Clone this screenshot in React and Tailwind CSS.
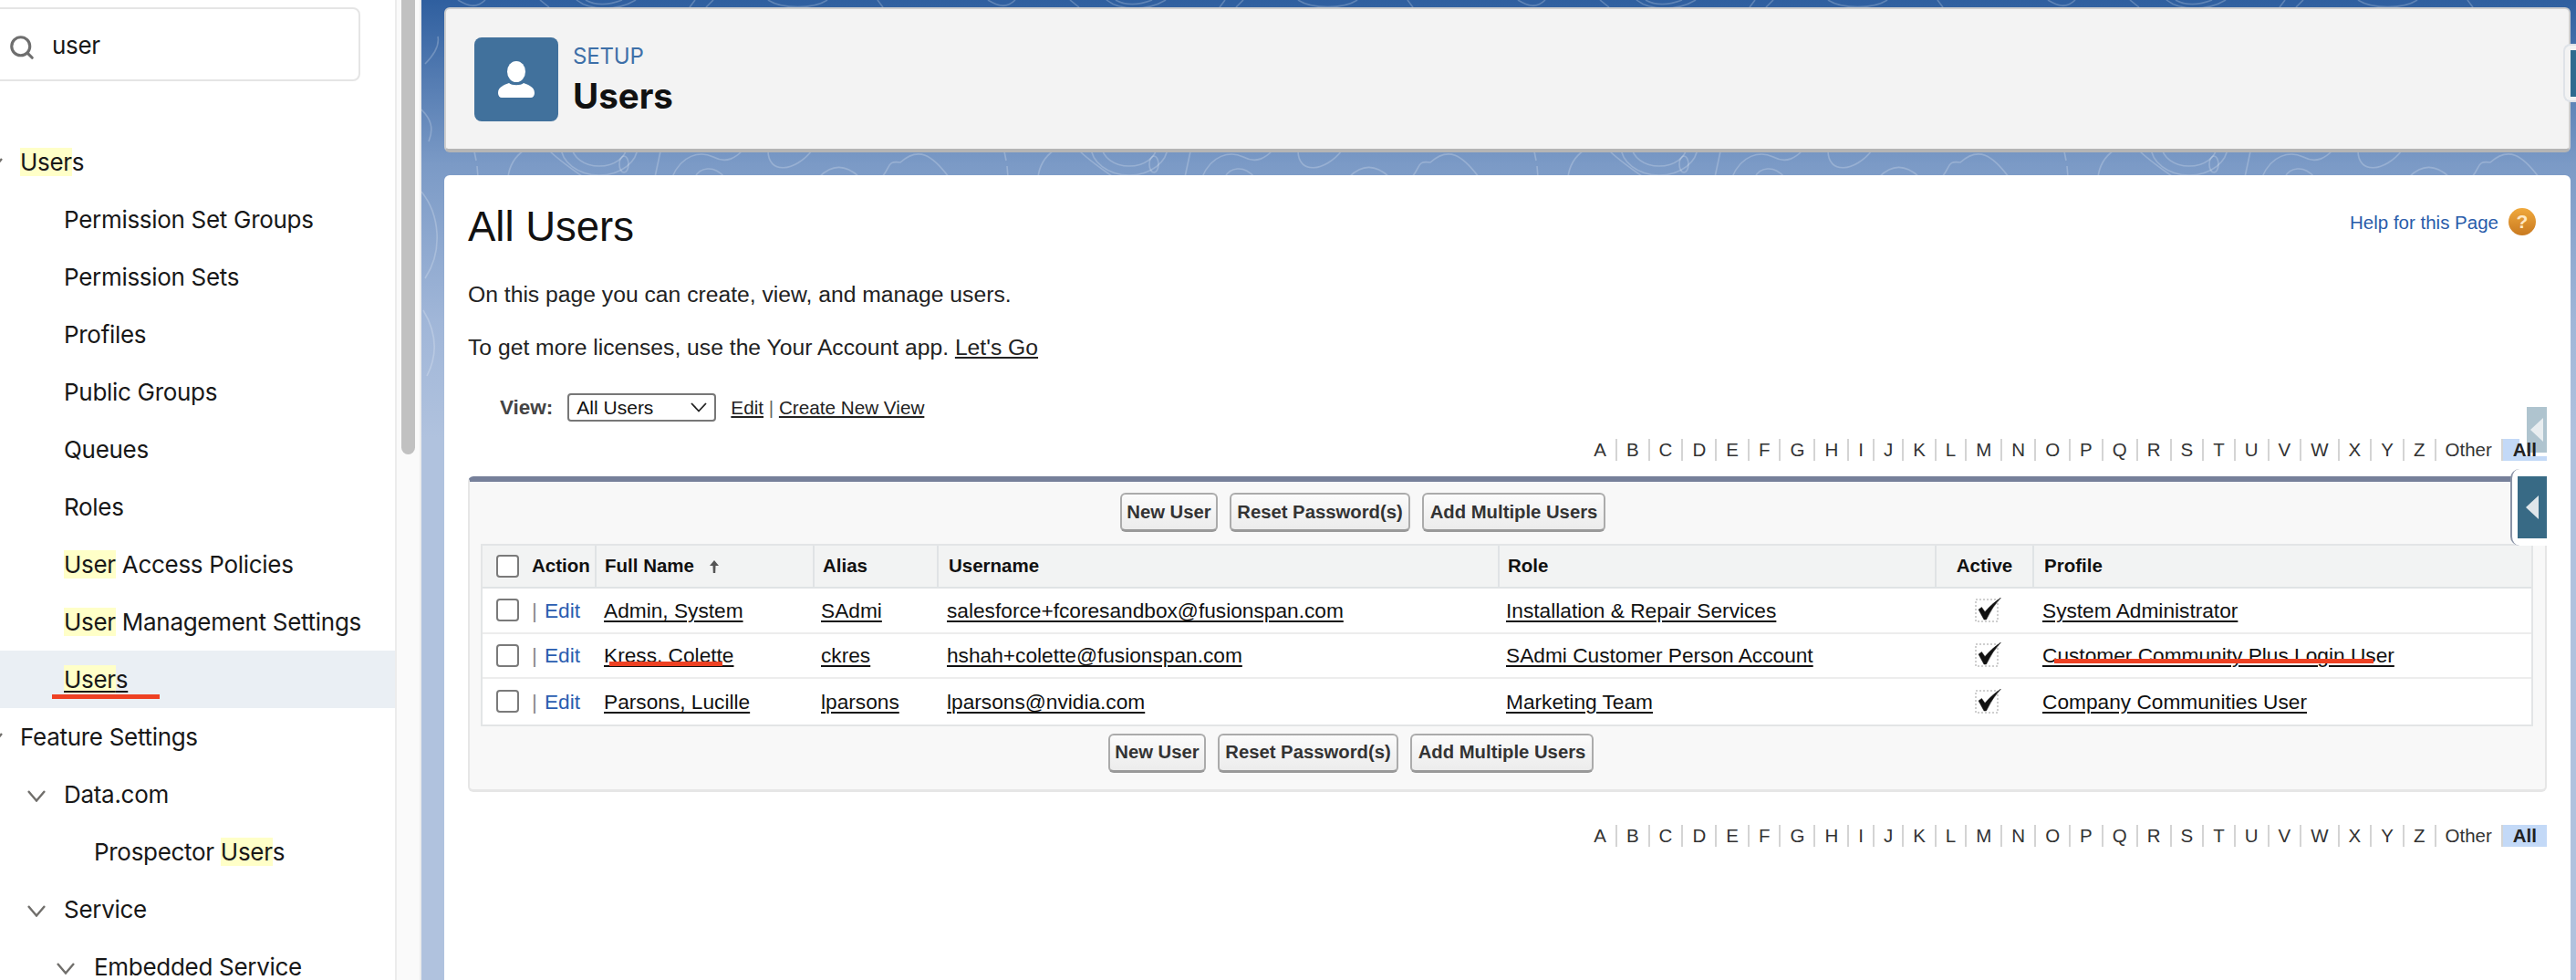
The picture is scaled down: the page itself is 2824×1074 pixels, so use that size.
import React from "react";
import { Search } from "lucide-react";

const sans = "[font-family:'Liberation_Sans',Arial,sans-serif]";
const letters = ["A","B","C","D","E","F","G","H","I","J","K","L","M","N","O","P","Q","R","S","T","U","V","W","X","Y","Z"];

function Hl({ children }) {
  return <span className="bg-[#ffffc8]">{children}</span>;
}

function Chevron({ className }) {
  return (
    <svg width="20" height="13" viewBox="0 0 20 13" fill="none" stroke="#706e6b" strokeWidth="2.4" className={className}>
      <path d="M1 1 L10 11.5 L19 1" />
    </svg>
  );
}

function Row({ level = 0, chevron, active, children }) {
  const pad = level === 0 ? "pl-[22px]" : level === 1 ? "pl-[70px]" : "pl-[103px]";
  return (
    <div className={`relative flex h-[63px] shrink-0 items-center text-[26px] leading-[30px] tracking-[-0.3px] text-[#181818] ${pad} ${active ? "bg-[#eaeff4]" : ""}`}>
      {chevron && (
        <Chevron className={`absolute top-[27px] ${level === 0 ? "left-[-17px]" : level === 1 ? "left-[30px]" : "left-[62px]"}`} />
      )}
      {children}
    </div>
  );
}

function Alpha() {
  return (
    <div className={`flex h-[24px] items-center justify-end text-[20.5px] leading-[24px] text-[#333] ${sans}`}>
      {letters.map((l, i) => (
        <span key={l} className={`px-[10px] ${i ? "border-l-2 border-[#d4d4d4]" : ""}`}>{l}</span>
      ))}
      <span className="border-l-2 border-[#d4d4d4] px-[10px]">Other</span>
      <span className="h-[24px] border-l-2 border-[#d4d4d4] bg-[#c3d9f7] px-[11px] font-bold text-[#222]">
        <span className="relative z-20">All</span>
      </span>
    </div>
  );
}

function Btn({ children, className }) {
  return (
    <button className={`h-[43px] rounded-[6px] border-2 border-[#ababab] border-b-[3px] border-b-[#999] bg-gradient-to-b from-[#fbfbfb] to-[#ececec] text-[20.3px] font-bold text-[#333] ${className}`}>
      {children}
    </button>
  );
}

function Buttons({ className }) {
  return (
    <div className={`flex gap-[13px] ${className}`}>
      <Btn className="w-[107px]">New User</Btn>
      <Btn className="w-[198px]">Reset Password(s)</Btn>
      <Btn className="w-[201px]">Add Multiple Users</Btn>
    </div>
  );
}

function Box() {
  return <span className="block h-[25px] w-[25px] rounded-[4px] border-2 border-[#7a7a7a] bg-white" />;
}

function Check() {
  return (
    <svg width="30" height="28" viewBox="0 0 30 28">
      <rect x="1" y="2" width="24" height="24" fill="none" stroke="#cfcfcf" strokeWidth="2" strokeDasharray="2 2" />
      <path d="M4 13 L7.5 10.5 L11 15.5 Q18 7 28.5 0 Q19 10 12.5 24 L10 24 Z" fill="#111" stroke="#111" strokeWidth="0.5" />
    </svg>
  );
}

const cols = "grid grid-cols-[123px_239px_136px_615px_479px_107px_1fr]";
const rows = [
  ["Admin, System", "SAdmi", "salesforce+fcoresandbox@fusionspan.com", "Installation & Repair Services", "System Administrator"],
  ["Kress, Colette", "ckres", "hshah+colette@fusionspan.com", "SAdmi Customer Person Account", "Customer Community Plus Login User"],
  ["Parsons, Lucille", "lparsons", "lparsons@nvidia.com", "Marketing Team", "Company Communities User"],
];

function Th({ children, className = "" }) {
  return <div className={`flex items-center border-l-2 border-[#e0e3e5] text-[20.5px] font-bold text-[#111] ${className}`}>{children}</div>;
}

function Td({ children, className = "" }) {
  return <div className={`relative flex items-center text-[22.7px] text-[#111] ${className}`}><span className="relative underline decoration-2 underline-offset-[3px]">{children}</span></div>;
}

function Swirls() {
  return (
    <svg className="absolute left-0 top-0" width="2362" height="480" fill="none">
      <defs>
        <pattern id="tile" patternUnits="userSpaceOnUse" width="581" height="480">
          <g fill="none" stroke="#fff" strokeOpacity="0.22" strokeWidth="1.6">
            <path d="M58 166 L60 176 M61 182 L62 194" />
            <path d="M95 194 C97 178 105 170 112 165" />
            <path d="M140 165 C150 175 165 185 177 194" />
            <ellipse cx="195" cy="160" rx="30" ry="22" />
            <ellipse cx="195" cy="160" rx="42" ry="32" />
            <ellipse cx="222" cy="180" rx="5" ry="9" />
            <path d="M256 194 L262 166" />
            <path d="M275 194 C285 170 305 165 320 172 C335 180 345 172 352 165" />
            <path d="M300 194 C305 184 320 180 332 194" />
            <path d="M380 165 C380 192 410 188 428 165" />
            <path d="M436 194 C450 180 465 180 480 194" />
            <path d="M505 194 C515 182 510 176 525 178 C545 160 560 170 578 194" />
            <path d="M40 0 C50 6 60 10 70 0 M130 0 L140 8 M170 0 C185 12 215 12 235 0 M180 0 C190 6 205 6 220 0 M300 0 L294 8 M320 0 L312 8 M380 0 C395 10 430 10 445 0 M500 0 L506 8" />
            <path d="M0 210 C20 235 24 275 4 305 M2 340 C14 360 20 385 6 412 M4 70 C14 60 20 50 18 40 M0 120 C10 130 14 140 8 155" />
          </g>
        </pattern>
      </defs>
      <rect width="2362" height="480" fill="url(#tile)" />
    </svg>
  );
}

export default function App() {
  return (
    <div className={`flex h-[1074px] w-[2824px] overflow-hidden bg-white ${sans}`}>
      {/* Setup tree */}
      <aside className="w-[433px] shrink-0 overflow-hidden bg-white [font-family:Inter,sans-serif]">
        <div className="relative ml-[-12px] mt-[8px] flex h-[81px] w-[407px] items-center rounded-[8px] border-2 border-[#e5e5e5] pl-[67px] text-[26px] tracking-[-0.3px] text-[#181818]">
          <Search className="absolute left-[19px] top-[27px] h-[30px] w-[30px] text-[#6e6e6e]" strokeWidth={2.5} />
          <span className="mt-[2px]">user</span>
        </div>
        <div className="mt-[57px] flex flex-col">
          <Row chevron><span><Hl>User</Hl>s</span></Row>
          <Row level={1}>Permission Set Groups</Row>
          <Row level={1}>Permission Sets</Row>
          <Row level={1}>Profiles</Row>
          <Row level={1}>Public Groups</Row>
          <Row level={1}>Queues</Row>
          <Row level={1}>Roles</Row>
          <Row level={1}><span><Hl>User</Hl> Access Policies</span></Row>
          <Row level={1}><span><Hl>User</Hl> Management Settings</span></Row>
          <Row level={1} active>
            <span className="relative underline underline-offset-[3px]">
              <Hl>User</Hl>s
              <span className="absolute left-[-13px] top-[31px] h-[5px] w-[118px] bg-[#ee4123]" />
            </span>
          </Row>
          <Row chevron>Feature Settings</Row>
          <Row level={1} chevron>Data.com</Row>
          <Row level={2}><span>Prospector <Hl>User</Hl>s</span></Row>
          <Row level={1} chevron>Service</Row>
          <Row level={2} chevron>Embedded Service</Row>
        </div>
      </aside>

      {/* Scrollbar */}
      <div className="h-full w-[29px] shrink-0 border-x-2 border-[#ececec] bg-[#fafafa] px-[5px]">
        <div className="h-[498px] rounded-b-[8px] bg-[#c1c1c1]" />
      </div>

      {/* Main */}
      <main className="relative flex flex-1 flex-col gap-[25px] bg-[#b0c2de] pl-[25px] pr-[6px] pt-[8px]">
        <div className="absolute inset-x-0 top-0 h-[480px] bg-[linear-gradient(#2f5f9f,#7b9ac6_180px,#a0b6d8_350px,#b0c2de_480px)]" />
        <Swirls />

        <header className="relative flex h-[159px] shrink-0 items-center gap-[16px] rounded-[6px] border-2 border-b-4 border-[#cfcfcf] border-b-[#b5b5b5] bg-[#f3f3f3] pl-[31px] [font-family:Inter,sans-serif]">
          <div className="flex h-[92px] w-[92px] items-center justify-center rounded-[8px] bg-[#41719c]">
            <svg width="40" height="40" viewBox="0 0 40 40" fill="#fff">
              <ellipse cx="20" cy="11.5" rx="10" ry="11.5" />
              <path d="M0 35 C0 28 7 26 12 24 C15 27 25 27 28 24 C33 26 40 28 40 35 C40 38 38 40 36 40 L4 40 C2 40 0 38 0 35 Z" />
            </svg>
          </div>
          <div className="mt-[3px] flex flex-col">
            <span className="text-[24px] leading-[30px] tracking-[-0.2px] text-[#3d6fa8]">SETUP</span>
            <span className="mt-[4px] text-[38.5px] font-bold leading-[48px] text-[#111]">Users</span>
          </div>
          <div className="absolute right-[-8px] top-[38px] h-[64px] w-[14px] rounded-l-[8px] border-2 border-r-0 border-[#dfe3e8] bg-[#f3f3f3]">
            <div className="ml-[6px] mt-[5px] h-[51px] w-[8px] bg-[#2f6a8f]" />
          </div>
        </header>

        <section className="relative flex-1 rounded-t-[6px] bg-white px-[26px] pt-[28px]">
          <div className="flex h-[56px] items-center justify-between">
            <h1 className="mt-[2px] text-[45.5px] leading-[56px] text-[#111]">All Users</h1>
            <div className="mb-[11px] mr-[12px] flex items-center gap-[11px]">
              <span className="mt-[3px] text-[20.5px] text-[#2a5caa]">Help for this Page</span>
              <span className="flex h-[30px] w-[30px] items-center justify-center rounded-full bg-gradient-to-b from-[#f0a93c] to-[#c97a20] text-[21px] font-bold text-[#ffe9c4]">?</span>
            </div>
          </div>
          <p className="mt-[29px] text-[24.7px] leading-[36px] text-[#222]">On this page you can create, view, and manage users.</p>
          <p className="mt-[22px] text-[24.7px] leading-[36px] text-[#222]">
            To get more licenses, use the Your Account app. <span className="underline">Let's Go</span>
          </p>
          <div className="ml-[35px] mt-[32px] flex h-[31px] items-center">
            <span className="text-[22.5px] font-bold text-[#444]">View:</span>
            <div className="relative ml-[16px] flex h-[31px] w-[163px] items-center rounded-[4px] border-2 border-[#777] pl-[8px] text-[21px] text-[#111]">
              All Users
              <svg width="18" height="11" viewBox="0 0 18 11" fill="none" stroke="#222" strokeWidth="1.8" className="absolute right-[8px] top-[8px]">
                <path d="M1 1 L9 9.5 L17 1" />
              </svg>
            </div>
            <span className="ml-[16px] text-[20.7px] text-[#222]"><span className="underline">Edit</span> <span className="text-[#666]">|</span> <span className="underline">Create New View</span></span>
          </div>
          <div className="mt-[19px]"><Alpha /></div>

          <div className="mt-[17px] h-[346px] rounded-[6px] border-x-2 border-b-[3px] border-t-[6px] border-[#e6e6e6] border-t-[#76809a] bg-[#f8f8f8]">
            <Buttons className="ml-[713px] mt-[12px]" />
            <div className="ml-[12px] mt-[13px] w-[2250px] border-2 border-[#e3e5e6] bg-white">
              <div className={`${cols} h-[47px] border-b-2 border-[#e0e3e5] bg-[#f2f3f3]`}>
                <div className="flex items-center gap-[14px] pl-[15px] text-[20.5px] font-bold text-[#111]"><Box />Action</div>
                <Th className="gap-[16px] pl-[9px]">
                  Full Name
                  <svg width="12" height="14" viewBox="0 0 12 14" fill="#555"><path d="M6 0 L11 6 L7.5 6 L7.2 14 L4.8 14 L4.5 6 L1 6 Z" /></svg>
                </Th>
                <Th className="pl-[9px]">Alias</Th>
                <Th className="pl-[11px]">Username</Th>
                <Th className="pl-[9px]">Role</Th>
                <Th className="justify-center">Active</Th>
                <Th className="pl-[11px]">Profile</Th>
              </div>
              {rows.map((r, i) => (
                <div key={r[0]} className={`${cols} h-[49.5px] ${i < 2 ? "border-b-2 border-[#ededed]" : ""}`}>
                  <div className="flex items-center pl-[15px] text-[22.7px]">
                    <Box />
                    <span className="ml-[14px] text-[#888]">|</span>
                    <span className="ml-[8px] text-[#2a5db0]">Edit</span>
                  </div>
                  <Td className="pl-[10px]">
                    {r[0]}
                    {i === 1 && <span className="absolute left-[6px] top-[24px] h-[5px] w-[124px] bg-[#ee4123]" />}
                  </Td>
                  <Td className="pl-[9px]">{r[1]}</Td>
                  <Td className="pl-[11px]">{r[2]}</Td>
                  <Td className="pl-[9px]">{r[3]}</Td>
                  <div className="flex items-center justify-center pl-[10px]"><Check /></div>
                  <Td className="pl-[11px]">
                    {r[4]}
                    {i === 1 && <span className="absolute left-[13px] top-[21px] h-[5px] w-[350px] bg-[#ee4123]" />}
                  </Td>
                </div>
              ))}
            </div>
            <Buttons className="ml-[700px] mt-[8px]" />
          </div>

          <div className="mt-[36px]"><Alpha /></div>

          {/* side tabs */}
          <div className="absolute right-[26px] top-[245px] z-10 h-[63px] w-[30px] rounded-l-[10px] bg-white pl-[8px] pt-[9px]">
            <div className="flex h-[50px] w-[22px] items-center justify-center bg-[#afc4cf]">
              <span className="h-0 w-0 border-y-[13px] border-r-[14px] border-y-transparent border-r-[#e8edf0]" />
            </div>
          </div>
          <div className="absolute right-[26px] top-[322px] h-[84px] w-[40px] rounded-l-[10px] border-l-2 border-[#8a93a6] bg-white pl-[6px] pt-[8px]">
            <div className="flex h-[68px] w-[32px] items-center justify-center bg-[#386a85]">
              <span className="h-0 w-0 border-y-[13px] border-r-[14px] border-y-transparent border-r-[#dfe6ea]" />
            </div>
          </div>
        </section>
      </main>
    </div>
  );
}
